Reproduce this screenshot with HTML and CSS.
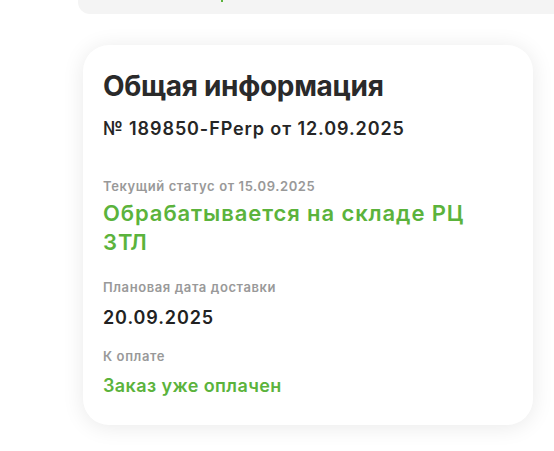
FILE: index.html
```html
<!DOCTYPE html>
<html lang="ru">
<head>
<meta charset="utf-8">
<link rel="stylesheet" href="styles.css">
</head>
<body>
<div class="topbar"><span class="tick"></span></div>
<section class="card">
  <h2 class="title">Общая информация</h2>
  <div class="number">№ 189850-FPerp от 12.09.2025</div>
  <div class="field status-field">
    <div class="label">Текущий статус от 15.09.2025</div>
    <div class="status">Обрабатывается на складе РЦ ЗТЛ</div>
  </div>
  <div class="field">
    <div class="label">Плановая дата доставки</div>
    <div class="value">20.09.2025</div>
  </div>
  <div class="field field-pay">
    <div class="label">К оплате</div>
    <div class="value green">Заказ уже оплачен</div>
  </div>
</section>
</body>
</html>
```
FILE: styles.css
```css
html, body {
  margin: 0;
  padding: 0;
  background: #ffffff;
}
body {
  font-family: Inter, "Noto Sans", sans-serif;
  color: #222222;
  width: 554px;
  height: 451px;
  overflow: hidden;
}
.topbar {
  position: relative;
  margin-left: 78px;
  height: 14px;
  background: #f4f4f4;
  border-bottom-left-radius: 12px;
}
.tick {
  position: absolute;
  left: 143px;
  top: 0;
  width: 2px;
  height: 2px;
  background: #5bb33c;
}
.card {
  margin: 31px 0 0 83px;
  width: 450px;
  height: 380px;
  box-sizing: border-box;
  padding: 24px 20px 0 20px;
  background: #ffffff;
  border-radius: 26px;
  box-shadow: 0 2px 22px rgba(0, 0, 0, 0.09);
}
.title {
  margin: 0;
  font-size: 28px;
  line-height: 34px;
  font-weight: 700;
  color: #2a2a2a;
  letter-spacing: -0.3px;
}
.number {
  margin-top: 14px;
  font-size: 18px;
  line-height: 24px;
  font-weight: 600;
  color: #262626;
  letter-spacing: 0.9px;
}
.field {
  margin-top: 21px;
}
.status-field {
  margin-top: 36px;
}
.field-pay {
  margin-top: 17px;
}
.label {
  font-size: 13px;
  line-height: 18px;
  font-weight: 600;
  color: #999999;
  letter-spacing: 0.6px;
}
.status {
  margin-top: 4px;
  font-size: 22px;
  line-height: 29px;
  font-weight: 600;
  color: #5bb33c;
  letter-spacing: 0.9px;
  width: 390px;
}
.value {
  margin-top: 10px;
  font-size: 18px;
  line-height: 24px;
  font-weight: 600;
  color: #222222;
  letter-spacing: 0.9px;
}
.value.green {
  margin-top: 9px;
  color: #5bb33c;
  letter-spacing: 0.4px;
}
```
